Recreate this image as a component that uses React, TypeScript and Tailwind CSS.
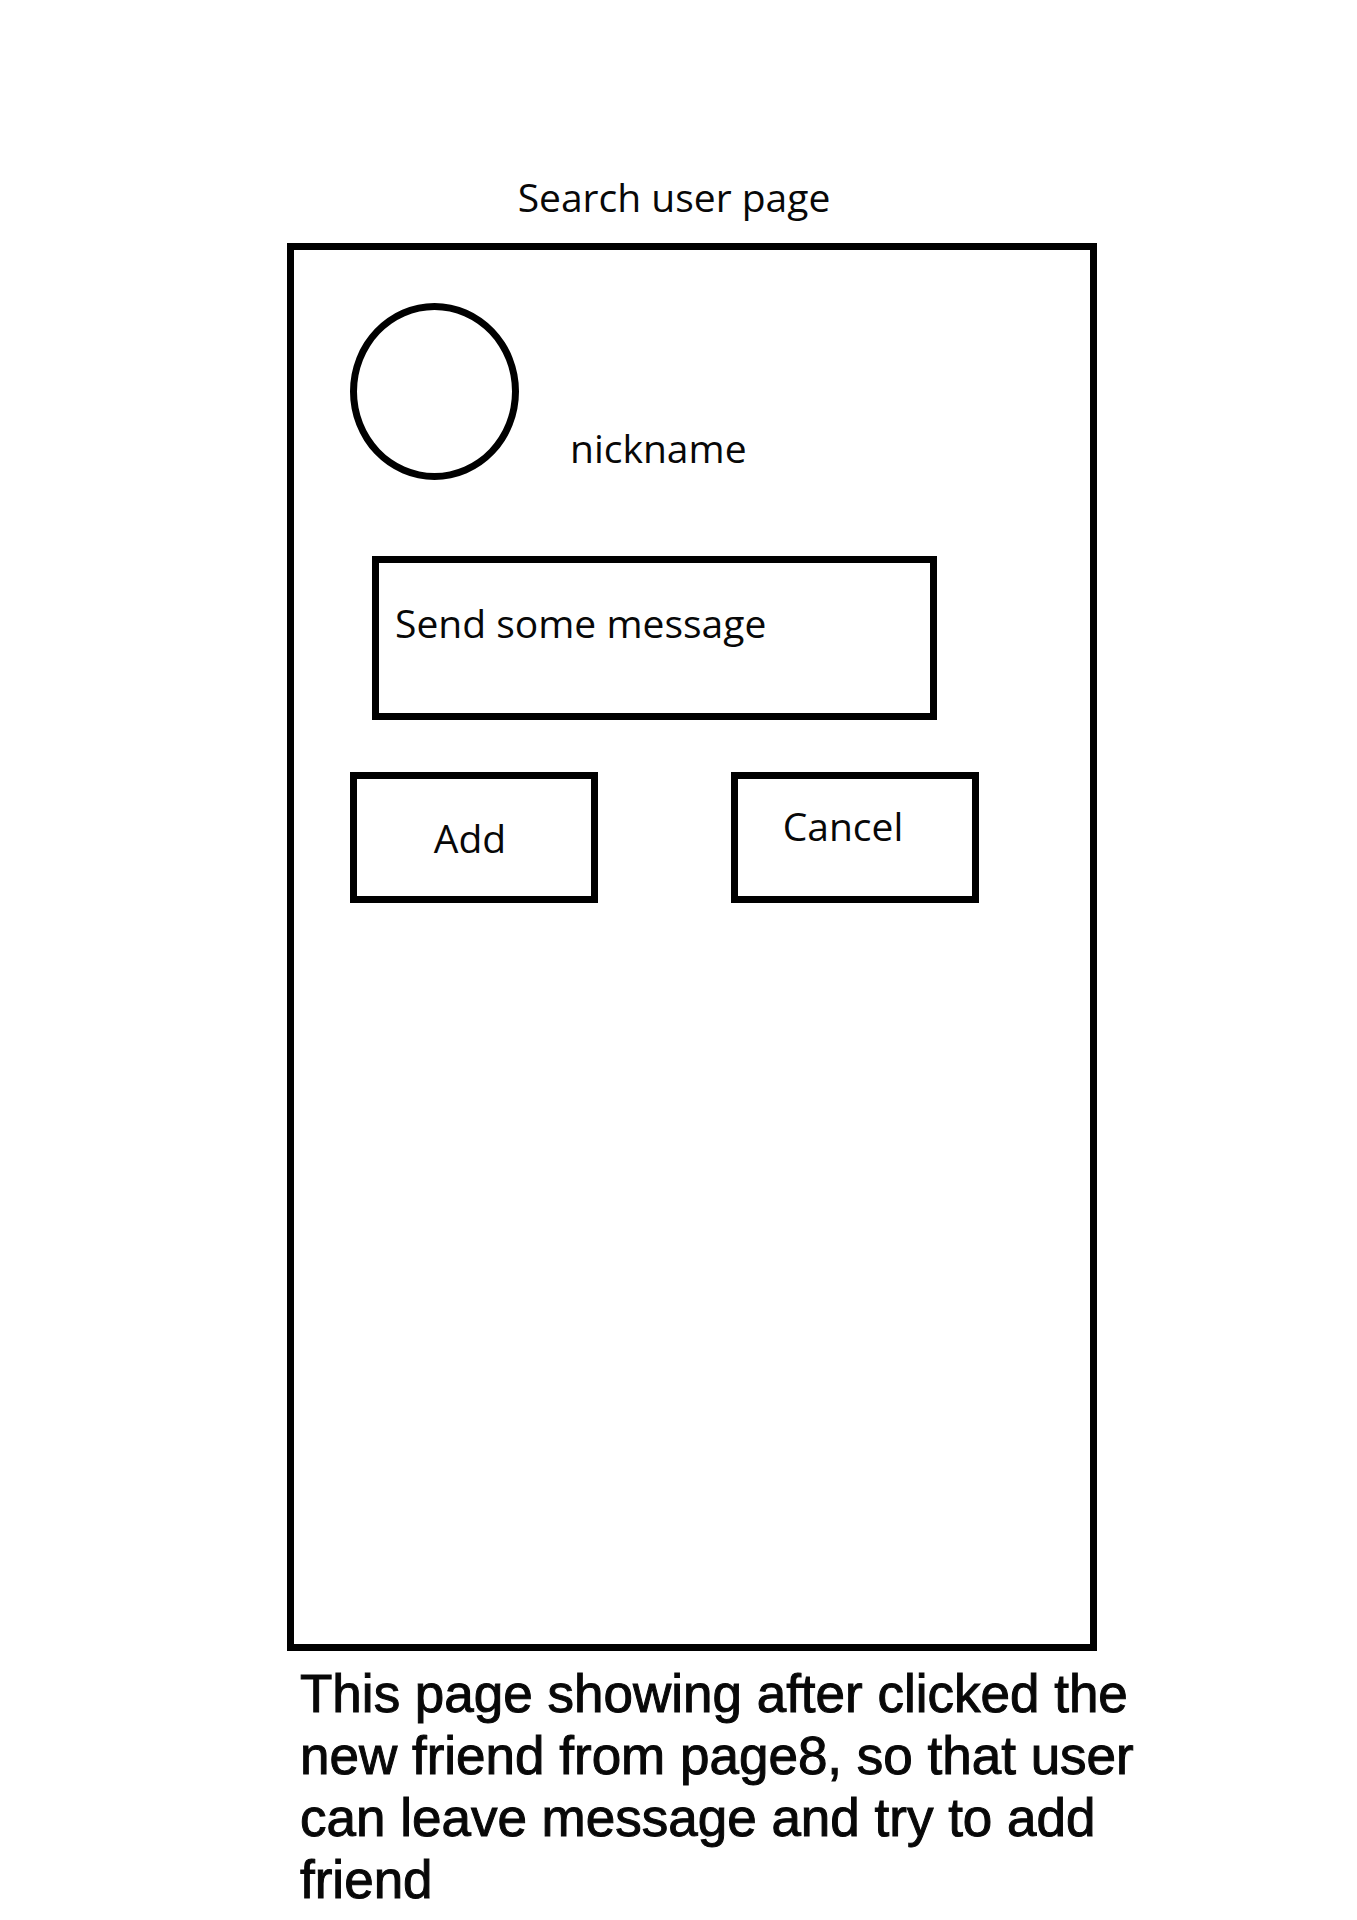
export default function App() {
  return (
    <main className="min-h-screen overflow-x-hidden bg-white pt-[171px] pl-[27px] font-['Open_Sans','Noto_Sans',sans-serif] text-[39px] leading-[52px] text-[#080808]">
      <div className="mx-auto w-full max-w-[810px]">
        <h1 className="mb-5 pr-9 text-center">Search user page</h1>

        <section className="min-h-[1408px] border-[7px] border-black px-14 pt-[53px]">
          <div className="flex items-end gap-[51px]">
            <div className="h-[177px] w-[169px] shrink-0 rounded-[50%] border-[7px] border-black" />
            <p className="pb-1.5">nickname</p>
          </div>

          <form onSubmit={(e) => e.preventDefault()}>
            <textarea
              aria-label="Message"
              placeholder="Send some message"
              className="mt-[76px] ml-[22px] block h-[164px] w-full max-w-[565px] resize-none border-[7px] border-black px-4 py-[34px] outline-none placeholder:text-[#080808] placeholder:opacity-100"
            />
            <div className="mt-[52px] flex gap-[133px]">
              <button
                type="button"
                className="h-[131px] w-[248px] border-[7px] border-black pr-2"
              >
                Add
              </button>
              <button
                type="button"
                className="h-[131px] w-[248px] border-[7px] border-black pr-6 pb-6"
              >
                Cancel
              </button>
            </div>
          </form>
        </section>

        <p className="-mr-12 pt-3 pl-[13px] font-['Liberation_Sans',Arial,sans-serif] text-[53px] leading-[62px] [-webkit-text-stroke:1px_#080808]">
          This page showing after clicked the new friend from page8, so that
          user can leave message and try to add friend
        </p>
      </div>
    </main>
  );
}
